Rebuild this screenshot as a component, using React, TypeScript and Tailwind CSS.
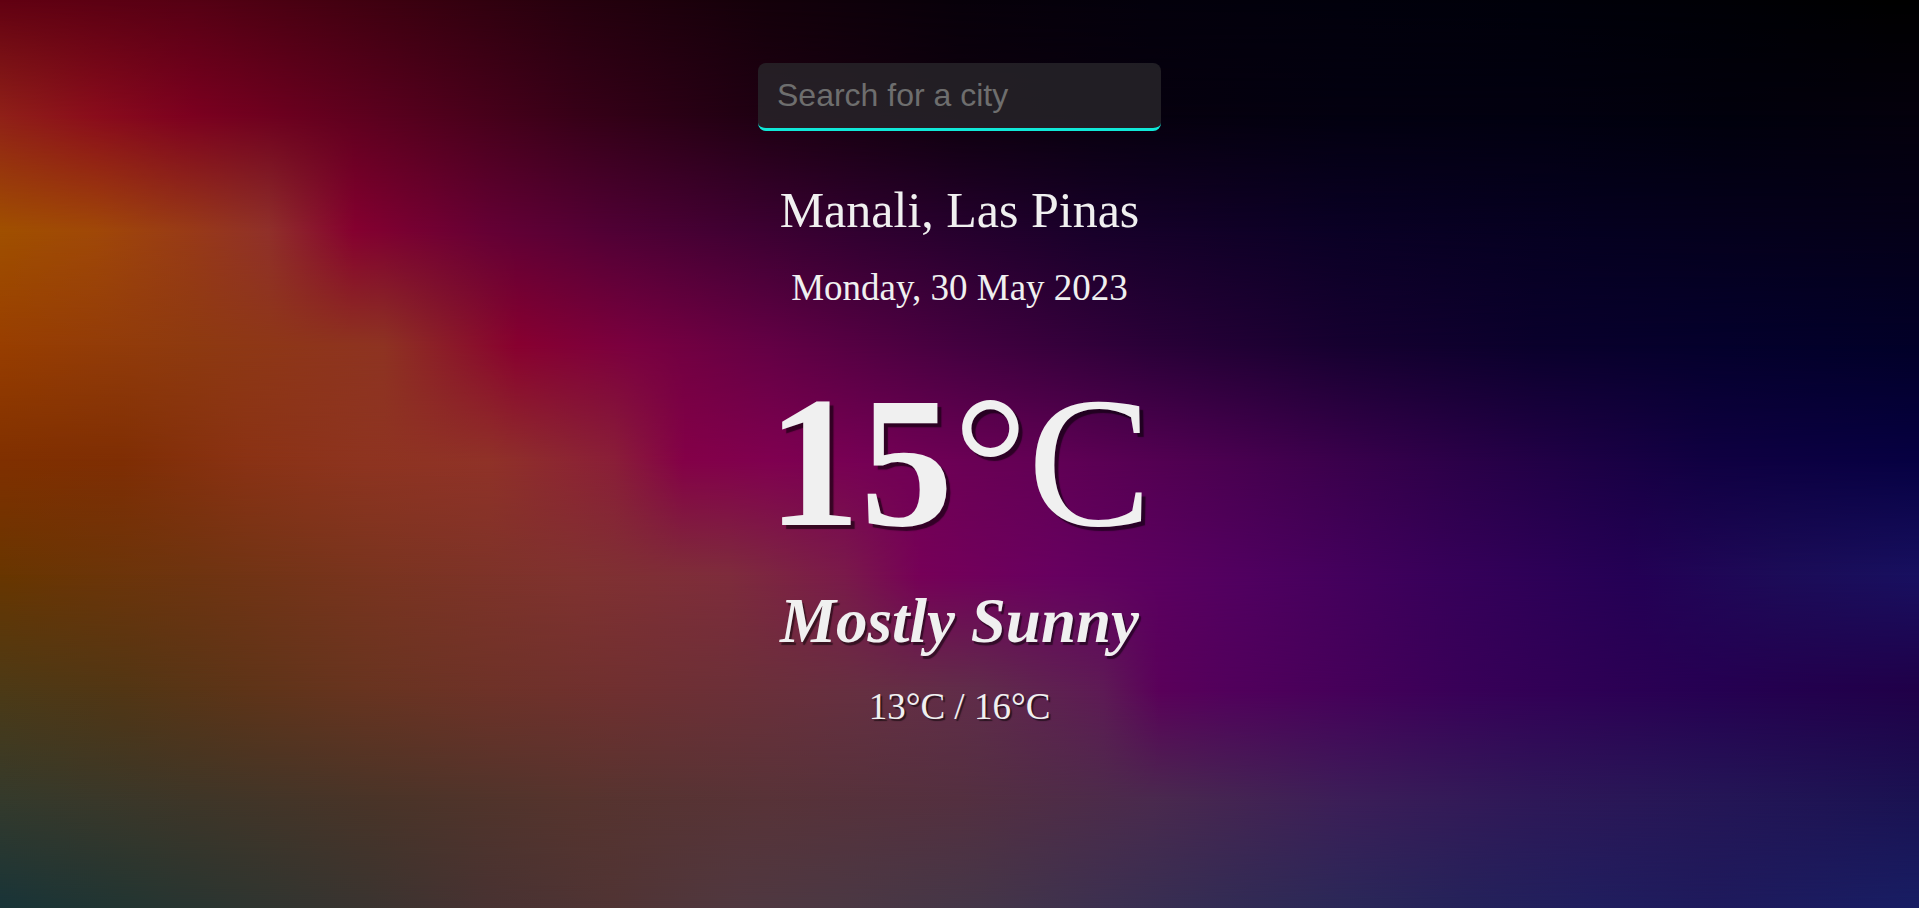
import { useState } from 'react'

type Row = { y: number; stops: [number, string][] }

// sampled colours of the wallpaper, one horizontal gradient per band
const rows: Row[] = [
  { y: 0, stops: [[0, '#620012'], [0.1, '#560014'], [0.2, '#3e0010'], [0.3, '#26000e'], [0.4, '#14000a'], [0.5, '#08000a'], [0.6, '#04000c'], [0.7, '#02000c'], [0.8, '#01000a'], [0.9, '#000006'], [1, '#000000']] },
  { y: 115, stops: [[0, '#902018'], [0.05, '#8a0c1c'], [0.1, '#7c0020'], [0.2, '#5a001e'], [0.3, '#380018'], [0.4, '#1e0012'], [0.5, '#0e000e'], [0.6, '#06000e'], [0.7, '#030010'], [0.8, '#020010'], [0.9, '#01000c'], [1, '#04000c']] },
  { y: 230, stops: [[0, '#a05000'], [0.05, '#a04808'], [0.1, '#983a18'], [0.14, '#90302a'], [0.185, '#850030'], [0.255, '#650035'], [0.32, '#500035'], [0.45, '#300030'], [0.57, '#18002a'], [0.7, '#0a0025'], [0.83, '#050020'], [1, '#050018']] },
  { y: 345, stops: [[0, '#983e00'], [0.1, '#8e3a10'], [0.2, '#8e3322'], [0.27, '#880030'], [0.33, '#7a0040'], [0.4, '#640045'], [0.5, '#440040'], [0.6, '#2a0038'], [0.7, '#160030'], [0.8, '#0a002c'], [0.9, '#04002c'], [1, '#020028']] },
  { y: 460, stops: [[0, '#803000'], [0.064, '#7f2e04'], [0.128, '#8a3214'], [0.19, '#8e3420'], [0.255, '#903228'], [0.32, '#8a1e38'], [0.357, '#840048'], [0.4, '#800050'], [0.45, '#760055'], [0.555, '#600055'], [0.64, '#4a0050'], [0.7, '#3a004c'], [0.765, '#2a0048'], [0.83, '#1c0045'], [0.89, '#100042'], [1, '#060042']] },
  { y: 575, stops: [[0, '#683600'], [0.1, '#6e3410'], [0.2, '#7a3420'], [0.3, '#803230'], [0.38, '#7e2c3c'], [0.44, '#7a1a4a'], [0.48, '#760058'], [0.55, '#680060'], [0.65, '#500060'], [0.75, '#38005a'], [0.85, '#240055'], [0.93, '#1c0c58'], [1, '#181060']] },
  { y: 690, stops: [[0, '#4c3a16'], [0.064, '#523614'], [0.128, '#5e3418'], [0.19, '#683420'], [0.255, '#6e3228'], [0.32, '#703030'], [0.38, '#6c3038'], [0.45, '#663042'], [0.51, '#602c4a'], [0.575, '#5e1a55'], [0.605, '#5a005a'], [0.64, '#52005c'], [0.7, '#46005a'], [0.765, '#380058'], [0.83, '#2e0055'], [0.89, '#260052'], [1, '#200048']] },
  { y: 800, stops: [[0, '#343a2c'], [0.1, '#3e3628'], [0.2, '#4a3428'], [0.3, '#56342e'], [0.4, '#583338'], [0.5, '#543040'], [0.6, '#4a2a4e'], [0.7, '#3c1e58'], [0.8, '#2e1858'], [0.9, '#241656'], [1, '#1a1252']] },
  { y: 908, stops: [[0, '#183438'], [0.064, '#223532'], [0.128, '#2e3530'], [0.191, '#3a3430'], [0.255, '#483232'], [0.319, '#503434'], [0.383, '#503840'], [0.446, '#4a3844'], [0.51, '#443648'], [0.574, '#3c3050'], [0.638, '#322c54'], [0.702, '#2a2858'], [0.765, '#24225a'], [0.829, '#201e5e'], [0.893, '#1e1a5c'], [1, '#181e64']] },
]

function Wallpaper() {
  return (
    <svg className="absolute inset-0 h-full w-full" viewBox="0 0 1919 908" preserveAspectRatio="none">
      <defs>
        {rows.map((r, i) => (
          <linearGradient key={i} id={`band${i}`} x1="0" y1="0" x2="1" y2="0">
            {r.stops.map(([o, c], j) => (
              <stop key={j} offset={o} stopColor={c} />
            ))}
          </linearGradient>
        ))}
        <linearGradient id="ramp" x1="0" y1="0" x2="0" y2="1">
          <stop offset="0" stopColor="#fff" stopOpacity="0" />
          <stop offset="1" stopColor="#fff" stopOpacity="1" />
        </linearGradient>
        <mask id="fade" maskContentUnits="objectBoundingBox">
          <rect width="1" height="1" fill="url(#ramp)" />
        </mask>
      </defs>
      {rows.slice(0, -1).map((r, i) => {
        const next = rows[i + 1]
        const h = next.y - r.y
        return (
          <g key={i}>
            <rect x="0" y={r.y} width="1919" height={h + 1} fill={`url(#band${i})`} />
            <rect x="0" y={r.y} width="1919" height={h + 1} fill={`url(#band${i + 1})`} mask="url(#fade)" />
          </g>
        )
      })}
    </svg>
  )
}

export default function App() {
  const [city, setCity] = useState('')

  return (
    <div className="relative h-[908px] w-full overflow-hidden bg-black">
      <Wallpaper />

      <main
        className="relative flex flex-col items-center pt-[63px] text-[#f0f0f0]"
        style={{ fontFamily: '"Liberation Serif", "Times New Roman", serif' }}
      >
        <input
          value={city}
          onChange={(e) => setCity(e.target.value)}
          placeholder="Search for a city"
          className="h-[68px] w-[403px] rounded-lg border-b-[3px] border-[#10e8d8] bg-[#28262a]/80 px-[19px] font-['Liberation_Sans',Arial,sans-serif] text-[32px] text-[#ddd] outline-none placeholder:text-[#6e6e6e]"
        />

        <h1 className="mt-[54px] text-[50px] leading-none font-normal">Manali, Las Pinas</h1>
        <p className="mt-[34px] text-[37px] leading-none">Monday, 30 May 2023</p>

        <div className="mt-[63px] text-[186px] leading-none [text-shadow:4px_4px_1px_rgba(0,0,0,0.55)]">
          <span className="font-bold">15</span>
          <span>°C</span>
        </div>

        <p className="mt-[35px] text-[63px] leading-none font-bold italic [text-shadow:2px_3px_1px_rgba(0,0,0,0.5)]">
          Mostly Sunny
        </p>
        <p className="mt-[35px] text-[37px] leading-none [text-shadow:2px_2px_1px_rgba(0,0,0,0.55)]">
          13°C / 16°C
        </p>
      </main>
    </div>
  )
}
